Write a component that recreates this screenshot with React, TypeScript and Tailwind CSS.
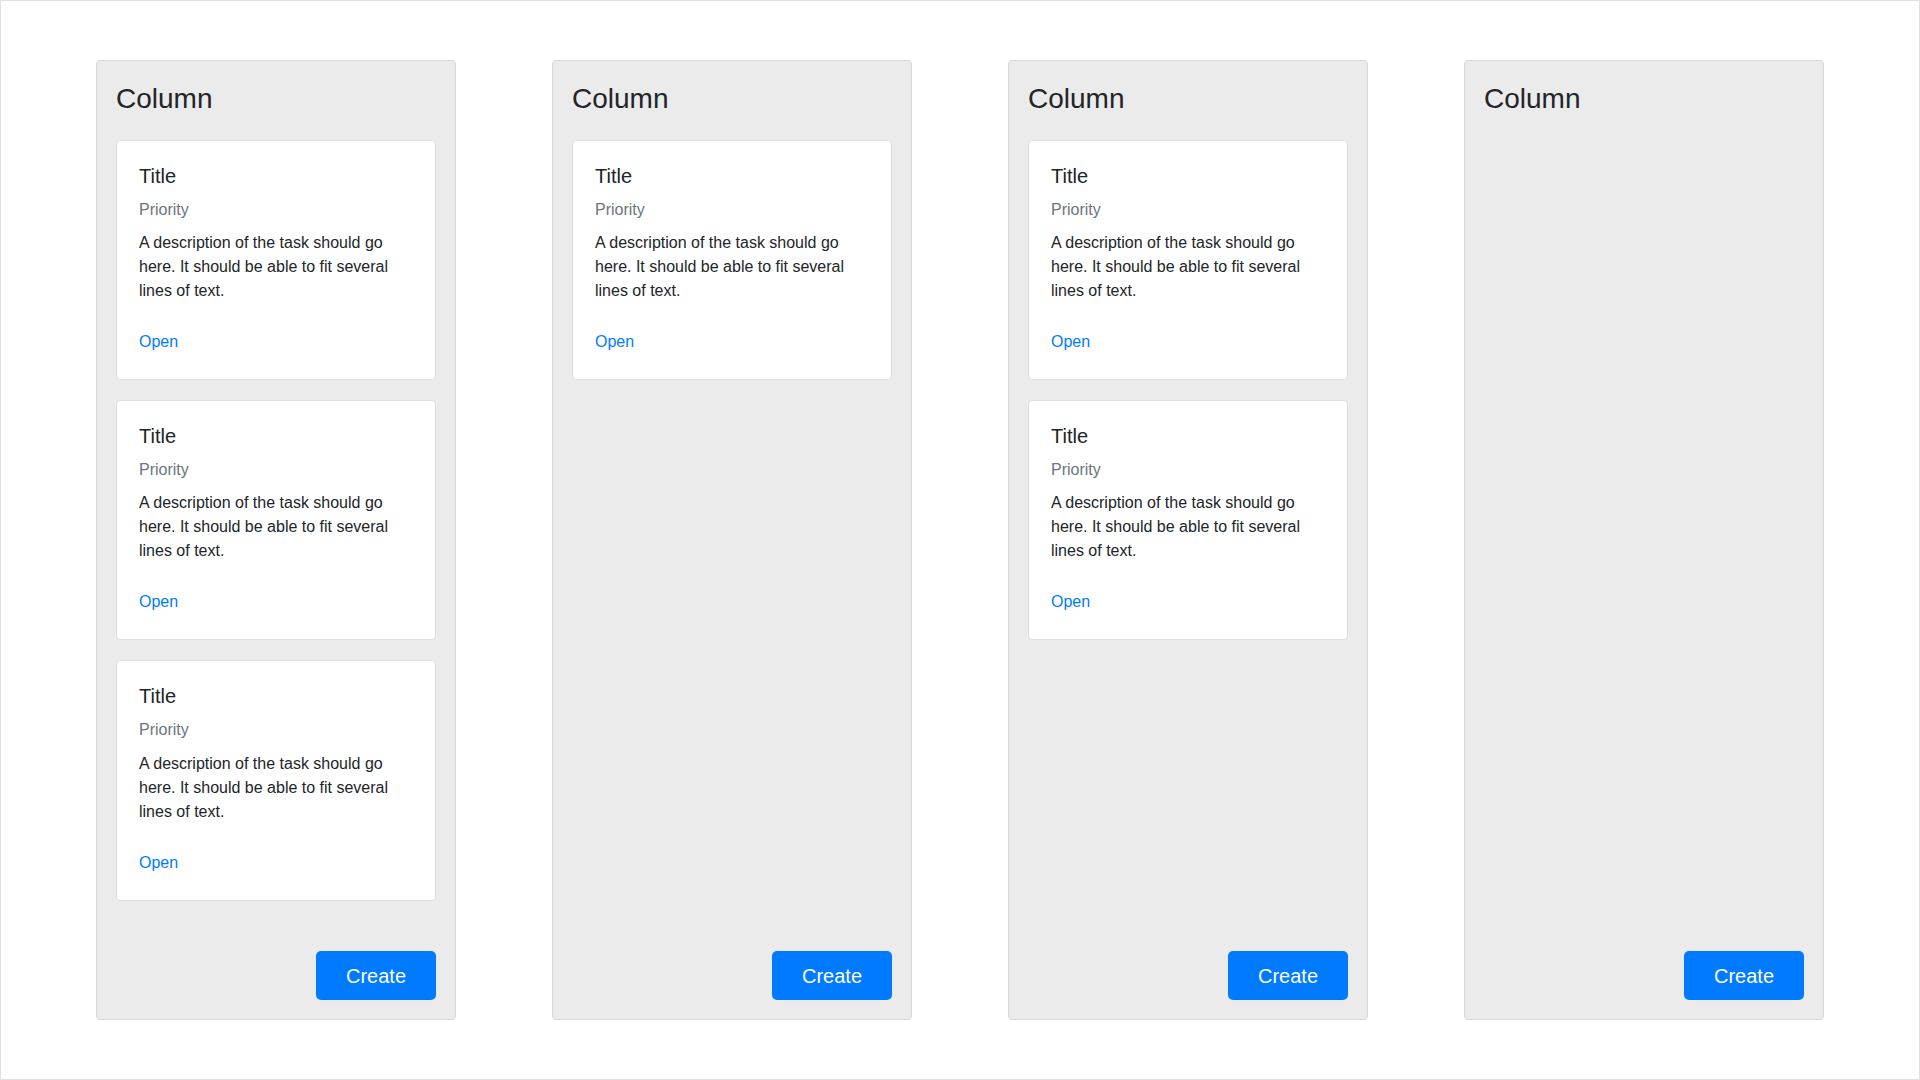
import React from "react";

const columns = [3, 1, 2, 0];

function Card() {
  return (
    <div className="bg-white border border-[#dfdfdf] rounded-[4px] px-[22px] pt-[23px] pb-[25px]">
      <div className="text-[20px] leading-[24px] text-[#212529]">Title</div>
      <div className="mt-[9.5px] text-[16px] leading-[24px] text-[#6c757d]">Priority</div>
      <p className="mt-[9.7px] text-[16px] leading-[24px] text-[#212529]">
        A description of the task should go here. It should be able to fit several lines of text.
      </p>
      <a href="#" className="block mt-[27px] text-[16px] leading-[24px] text-[#007bff]">
        Open
      </a>
    </div>
  );
}

function Column({ count }: { count: number }) {
  return (
    <div className="w-[360px] h-[960px] shrink-0 flex flex-col bg-[#ebebeb] border border-[#dadada] rounded-[4px] px-[19px] pt-[21px] pb-[19px]">
      <h3 className="text-[28px] leading-[34px] text-[#212529] mb-[24px]">Column</h3>
      <div className="flex flex-col gap-[20px]">
        {Array.from({ length: count }).map((_, i) => (
          <Card key={i} />
        ))}
      </div>
      <button className="mt-auto self-end w-[120px] h-[49px] rounded-[5px] bg-[#007bff] text-white text-[20px] leading-[30px]">
        Create
      </button>
    </div>
  );
}

export default function App() {
  return (
    <div
      className="w-[1920px] h-[1080px] bg-white border border-[#e2e2e2] box-border"
      style={{ fontFamily: '"Liberation Sans", Arial, Helvetica, sans-serif' }}
    >
      <div className="flex gap-[96px] pl-[95px] pt-[59px]">
        {columns.map((c, i) => (
          <Column key={i} count={c} />
        ))}
      </div>
    </div>
  );
}
